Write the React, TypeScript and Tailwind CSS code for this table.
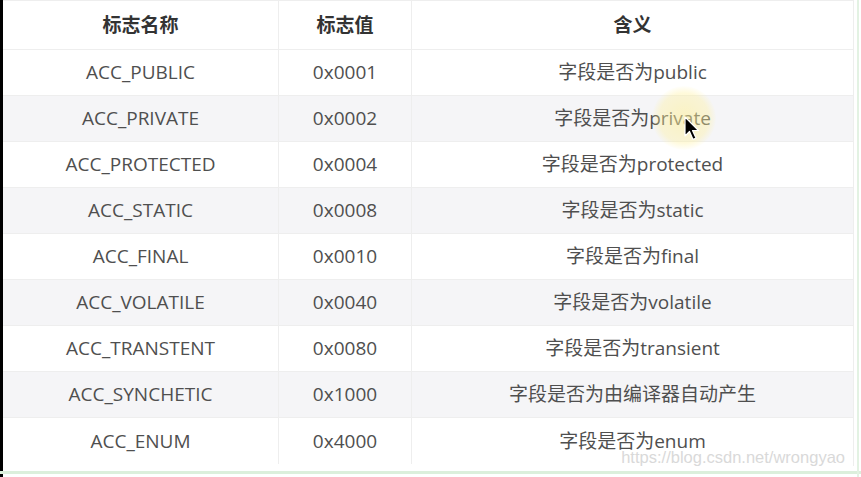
import React from 'react';

const rows: [string, string, string][] = [
  ['ACC_PUBLIC', '0x0001', '字段是否为public'],
  ['ACC_PRIVATE', '0x0002', '字段是否为private'],
  ['ACC_PROTECTED', '0x0004', '字段是否为protected'],
  ['ACC_STATIC', '0x0008', '字段是否为static'],
  ['ACC_FINAL', '0x0010', '字段是否为final'],
  ['ACC_VOLATILE', '0x0040', '字段是否为volatile'],
  ['ACC_TRANSTENT', '0x0080', '字段是否为transient'],
  ['ACC_SYNCHETIC', '0x1000', '字段是否为由编译器自动产生'],
  ['ACC_ENUM', '0x4000', '字段是否为enum'],
];

const font = { fontFamily: '"Open Sans", "Noto Sans CJK SC", sans-serif' };

export default function App() {
  return (
    <div className="w-[861px] h-[477px] bg-white relative overflow-hidden flex" style={font}>
      {/* dark left edge */}
      <div className="w-[3px] h-full bg-black" />

      <div className="flex flex-col">
        <div className="w-[851px] h-[466px] border-t border-r border-[#eeeeee] flex flex-col">
          {/* header */}
          <div className="grid grid-cols-[276px_133px_1fr] h-[49px] border-b border-[#eeeeee] text-[19px] font-bold text-[#333]">
            <div className="flex items-center justify-center border-r border-[#eeeeee]">标志名称</div>
            <div className="flex items-center justify-center border-r border-[#eeeeee]">标志值</div>
            <div className="flex items-center justify-center">含义</div>
          </div>

          {rows.map(([name, val, desc], i) => (
            <div
              key={name}
              className={`grid grid-cols-[276px_133px_1fr] h-[46px] text-[19px] text-[#4f4f4f] ${
                i % 2 === 1 ? 'bg-[#f5f5f7]' : 'bg-white'
              } ${i < rows.length - 1 ? 'border-b border-[#eeeeee]' : ''}`}
            >
              <div className="flex items-center justify-center border-r border-[#eeeeee]">{name}</div>
              <div className="flex items-center justify-center border-r border-[#eeeeee]">{val}</div>
              <div className="flex items-center justify-center">{desc}</div>
            </div>
          ))}
        </div>
      </div>

      {/* greenish frame at right/bottom */}
      <div className="absolute left-0 right-0 top-[471px] h-[3px] bg-[#dcefdc]" />
      <div className="absolute top-0 bottom-0 left-[857px] w-[2px] bg-[#e3f2e3]" />

      {/* watermark */}
      <div
        className="absolute right-[16px] top-[449px] text-[16.5px] text-[#d9d9d9] leading-none"
        style={{ fontFamily: '"Liberation Sans", Arial, sans-serif' }}
      >
        https://blog.csdn.net/wrongyao
      </div>

      {/* cursor highlight */}
      <div className="absolute left-[652px] top-[86px] w-[64px] h-[64px] rounded-full bg-[radial-gradient(circle,rgba(255,240,150,0.55)_0%,rgba(255,240,150,0.35)_55%,rgba(255,240,150,0)_72%)]" />
      <svg className="absolute left-[684px] top-[116px]" width="16" height="26" viewBox="0 0 16 26">
        <path d="M1 1 L1 20 L5.5 15.5 L9 23.5 L12 22 L8.5 14.5 L14.5 14.5 Z" fill="#000" stroke="#fff" strokeWidth="1.2" strokeLinejoin="round" />
      </svg>
    </div>
  );
}
